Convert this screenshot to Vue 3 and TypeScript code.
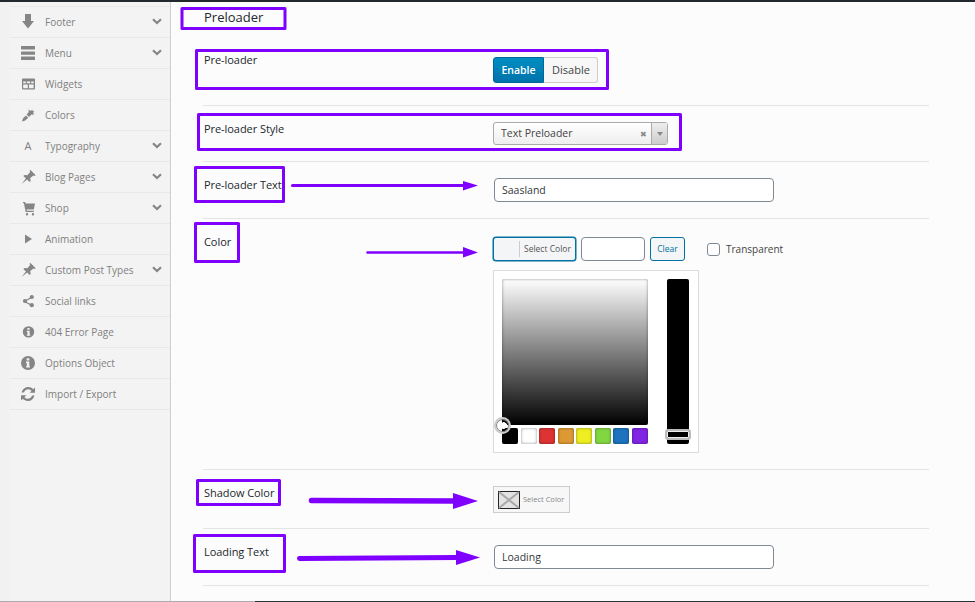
<script setup lang="ts">
interface NavItem {
  label: string
  icon: string
  more: boolean
}

const nav: NavItem[] = [
  { label: 'Footer', icon: 'down', more: true },
  { label: 'Menu', icon: 'menu', more: true },
  { label: 'Widgets', icon: 'table', more: false },
  { label: 'Colors', icon: 'brush', more: false },
  { label: 'Typography', icon: 'font', more: true },
  { label: 'Blog Pages', icon: 'pin', more: true },
  { label: 'Shop', icon: 'cart', more: true },
  { label: 'Animation', icon: 'play', more: false },
  { label: 'Custom Post Types', icon: 'pin', more: true },
  { label: 'Social links', icon: 'share', more: false },
  { label: '404 Error Page', icon: 'info-s', more: false },
  { label: 'Options Object', icon: 'info', more: false },
  { label: 'Import / Export', icon: 'refresh', more: false },
]

const swatches: string[] = ['#000000', '#ffffff', '#dd3333', '#dd9933', '#eeee22', '#81d742', '#1e73be', '#8224e3']
</script>

<template>
  <div class="page">
    <div class="topbar"></div>
    <div class="body">
      <div class="gutter"></div>
      <nav class="sidebar">
        <div v-for="item in nav" :key="item.label" class="nav-row">
          <span class="nav-icon">
            <span v-if="item.icon === 'font'" class="font-a">A</span>
            <svg v-else width="16" height="16" viewBox="0 0 16 16" fill="#858585">
              <polygon v-if="item.icon === 'down'" points="5,0 11,0 11,7 14,7 8,14.500 2,7 5,7" />
              <g v-else-if="item.icon === 'menu'">
                <rect x="1" y="1" width="14" height="3.400" rx=".5" />
                <rect x="1" y="6.400" width="14" height="3.400" rx=".5" />
                <rect x="1" y="11.600" width="14" height="3.400" rx=".5" />
              </g>
              <path
                v-else-if="item.icon === 'table'"
                fill-rule="evenodd"
                d="M3 2.500h11a1 1 0 0 1 1 1v9a1 1 0 0 1-1 1H3a1 1 0 0 1-1-1v-9a1 1 0 0 1 1-1zM3.200 5.600v1.600h2.600V5.600zm3.600 0v1.600h3.400V5.600zm4.400 0v1.600h2.600V5.600zM3.200 8.400v3.800h4.600V8.400zm5.800 0v3.800h4.600V8.400z"
              />
              <path
                v-else-if="item.icon === 'brush'"
                d="M2 14.500l1-3.200 3-2.800 2.200 2.200-3 2.800zM6.600 7.600l2.200-2.500L8.400 2.600l2.400 1.300 1.600-1.300.2 1.500 1.900.3-1.400 1.300.9 2-2.500-.3-2.500 2.600z"
              />
              <path
                v-else-if="item.icon === 'pin'"
                d="M1.500 15l4.400-5.600-2.500-2.500 1-1 3 .4 2.700-3.300-.5-1.500.9-.5 5 5-.5.9-1.500-.5-3.300 2.700.4 3-1 1-2.500-2.500z"
              />
              <path
                v-else-if="item.icon === 'cart'"
                d="M3 2h2.200l.3 1.600H15l-1.200 6H6.600l.2 1.200h7v1.300H5.700L3.900 3.300H3zM7 13a1.200 1.200 0 1 1 0 2.400A1.200 1.200 0 0 1 7 13zm6 0a1.200 1.200 0 1 1 0 2.400 1.200 1.200 0 0 1 0-2.400z"
              />
              <polygon v-else-if="item.icon === 'play'" points="5,3.500 12,8 5,12.500" />
              <g v-else-if="item.icon === 'share'">
                <path d="M5 7.400L11 4l.6 1-6 3.400 6 3.100-.6 1.100-6-3.200z" />
                <circle cx="5" cy="8" r="2.100" />
                <circle cx="11.800" cy="4" r="2.100" />
                <circle cx="11.800" cy="12.200" r="2.100" />
              </g>
              <path
                v-else-if="item.icon === 'info-s'"
                fill-rule="evenodd"
                d="M8.500 2.200a5.700 5.700 0 1 1 0 11.400 5.700 5.700 0 0 1 0-11.400zM7.400 3.900v1.900h2.200V3.900zM6.800 6.800v1.100h.7v2.700h-.7v1.200h3.400v-1.200h-.6V6.800z"
              />
              <path
                v-else-if="item.icon === 'info'"
                fill-rule="evenodd"
                d="M8 1a7 7 0 1 1 0 14A7 7 0 0 1 8 1zM6.700 3.200v2.200h2.600V3.200zM6 6.600V8h.8v3.200H6v1.400h4v-1.400h-.7V6.600z"
              />
              <g v-else-if="item.icon === 'refresh'">
                <path d="M1.600 6.600C2.300 3.400 5 1 8.200 1c2 0 3.700.9 4.900 2.200L15 1.400v5.300H9.700l1.900-1.900A4.600 4.600 0 0 0 8.200 3.300c-2 0-3.700 1.400-4.300 3.300z" />
                <path d="M14.400 9.400C13.700 12.600 11 15 7.800 15c-2 0-3.700-.9-4.900-2.200L1 14.600V9.300h5.300l-1.900 1.900a4.600 4.600 0 0 0 3.400 1.500c2 0 3.700-1.400 4.300-3.300z" />
              </g>
            </svg>
          </span>
          <span class="nav-label">{{ item.label }}</span>
          <svg v-if="item.more" class="chevron" width="10" height="7" viewBox="0 0 10 7">
            <path d="M1 1.200l4 3.800 4-3.800" fill="none" stroke="#858585" stroke-width="2.200" />
          </svg>
        </div>
      </nav>

      <main class="main">
        <h2 class="title">Preloader</h2>
        <div class="rows">
          <section class="row row-first">
            <div class="label">Pre-loader</div>
            <div class="btn-set">
              <button class="seg seg-on">Enable</button>
              <button class="seg seg-off">Disable</button>
            </div>
          </section>

          <section class="row">
            <div class="label">Pre-loader Style</div>
            <div class="select">
              <span class="select-value">Text Preloader</span>
              <span class="select-clear">✖</span>
              <span class="select-arrow"><i class="caret"></i></span>
            </div>
          </section>

          <section class="row">
            <div class="label">Pre-loader Text</div>
            <div class="input input-long">Saasland</div>
          </section>

          <section class="row">
            <div class="label">Color</div>
            <div class="color-field">
              <div class="color-top">
                <div class="color-btn">
                  <span class="color-well"></span>
                  <span class="color-btn-text">Select Color</span>
                </div>
                <div class="input input-hex"></div>
                <div class="clear-btn">Clear</div>
                <label class="transparent"><i class="check"></i>Transparent</label>
              </div>
              <div class="picker">
                <div class="picker-main">
                  <div class="gradient"></div>
                  <div class="palette">
                    <span
                      v-for="c in swatches"
                      :key="c"
                      class="swatch"
                      :style="{ backgroundColor: c }"
                    ></span>
                  </div>
                  <span class="picker-dot"></span>
                </div>
                <div class="strip"><span class="strip-handle"></span></div>
              </div>
            </div>
          </section>

          <section class="row row-shadow">
            <div class="label">Shadow Color</div>
            <div class="shadow-btn">
              <svg class="shadow-well" width="22" height="18" viewBox="0 0 22 18">
                <rect x=".5" y=".5" width="21" height="17" fill="#e2e2e2" stroke="#222" />
                <path d="M1 1l20 16M21 1L1 17" stroke="#a8a8a8" stroke-width="2" />
              </svg>
              <span class="shadow-text">Select Color</span>
            </div>
          </section>

          <section class="row">
            <div class="label">Loading Text</div>
            <div class="input input-long">Loading</div>
          </section>
        </div>
      </main>
    </div>
    <div class="bottom">
      <span class="bottom-a"></span>
      <span class="bottom-b"></span>
    </div>

    <svg class="notes" width="975" height="602" viewBox="0 0 975 602">
      <g fill="none" stroke="#7f00ff" stroke-width="3" stroke-linejoin="round">
        <rect x="182" y="8.500" width="103" height="20" />
        <rect x="196.500" y="50.500" width="411" height="38" />
        <rect x="198.500" y="114.500" width="482" height="35" />
        <rect x="195.500" y="167.500" width="88" height="34" />
        <rect x="195.500" y="223.500" width="43" height="38" />
        <rect x="197.500" y="480.500" width="82" height="24" />
        <rect x="194.500" y="535.500" width="90" height="36" />
      </g>
      <g stroke="#7f00ff" stroke-linecap="round" fill="none">
        <path d="M292.500 185.500H465" stroke-width="3" />
        <path d="M367.500 252.500H465" stroke-width="2.500" />
        <path d="M311.500 500.500L455 501" stroke-width="5.500" />
        <path d="M299.500 558.500L458 557.500" stroke-width="5" />
      </g>
      <g fill="#7f00ff">
        <polygon points="463,181 478,185.500 463,190.500" />
        <polygon points="463,247 478,252.500 463,257.500" />
        <polygon points="453,493 478,501 453,509" />
        <polygon points="456,550 480,557.500 456,565" />
      </g>
    </svg>
  </div>
</template>

<style scoped>
.page {
  position: relative;
  width: 975px;
  height: 602px;
  overflow: hidden;
  display: flex;
  flex-direction: column;
  background: #fcfcfc;
  font-family: "Open Sans", "Noto Sans", sans-serif;
}
.topbar {
  height: 2px;
  flex: none;
  background: #23282d;
}
.body {
  flex: 1;
  min-height: 0;
  display: flex;
}
.gutter {
  width: 10px;
  flex: none;
  background: #f1f1f1;
}
.sidebar {
  width: 160px;
  flex: none;
  padding-top: 4px;
  background: #f3f3f3;
  border-right: 1px solid #cfcfcf;
}
.nav-row {
  height: 31px;
  box-sizing: border-box;
  display: flex;
  align-items: center;
  padding: 0 8px 0 10px;
  border-top: 1px solid #e8e8e8;
  color: #7f7f7f;
  font-size: 10px;
  font-weight: 400;
}
.nav-row:last-child {
  height: 32px;
  border-bottom: 1px solid #e8e8e8;
}
.nav-icon {
  width: 16px;
  height: 16px;
  flex: none;
  margin-right: 9px;
  display: flex;
  align-items: center;
  justify-content: center;
}
.font-a {
  font-size: 11px;
  font-weight: 400;
  line-height: 16px;
}
.nav-label {
  flex: 1;
  white-space: nowrap;
}
.chevron {
  flex: none;
  margin-bottom: 2px;
}
.main {
  flex: 1;
  min-width: 0;
  padding-left: 32px;
}
.title {
  margin: 0;
  height: 39px;
  box-sizing: border-box;
  padding: 6px 0 0 1px;
  font-size: 13px;
  line-height: 18px;
  font-weight: 500;
  color: #23282d;
}
.rows {
  width: 726px;
}
.row {
  display: grid;
  grid-template-columns: 290px 1fr;
  align-items: start;
  padding: 16px 0;
  border-bottom: 1px solid #e4e4e4;
}
.row-first {
  padding-bottom: 22px;
}
.row-first .label {
  margin-top: -5px;
}
.row-shadow {
  padding-bottom: 15px;
}
.label {
  margin-top: -1px;
  padding-left: 1px;
  font-size: 11px;
  line-height: 15px;
  letter-spacing: -.06px;
  color: #23282d;
}
.btn-set {
  display: flex;
  width: 105px;
  height: 26px;
}
.seg {
  margin: 0;
  padding: 0;
  font-family: inherit;
  font-size: 11px;
  line-height: 24px;
  box-sizing: border-box;
  cursor: pointer;
}
.seg-on {
  width: 51px;
  color: #fff;
  font-size: 10.500px;
  font-weight: 600;
  background: linear-gradient(#008ec2, #0073aa);
  border: 1px solid #006799;
  border-radius: 3px 0 0 3px;
}
.seg-off {
  width: 54px;
  padding-left: 1px;
  color: #444;
  background: #f7f7f7;
  border: 1px solid #ccc;
  border-left: 0;
  border-radius: 0 3px 3px 0;
}
.select {
  width: 175px;
  height: 23px;
  box-sizing: border-box;
  display: flex;
  align-items: center;
  border: 1px solid #aaa;
  border-radius: 3px;
  background: linear-gradient(#ffffff, #eeeeee);
  font-size: 10.500px;
  color: #444;
}
.select-value {
  flex: 1;
  padding: 0 0 2px 7px;
}
.select-clear {
  font-size: 8px;
  color: #888;
  margin-right: 4px;
}
.select-arrow {
  width: 16px;
  height: 100%;
  box-sizing: border-box;
  border-left: 1px solid #aaa;
  background: linear-gradient(#eeeeee, #cccccc);
  display: flex;
  align-items: center;
  justify-content: center;
}
.caret {
  width: 0;
  height: 0;
  border-left: 3px solid transparent;
  border-right: 3px solid transparent;
  border-top: 4px solid #888;
}
.input {
  box-sizing: border-box;
  height: 24px;
  border: 1px solid #7e8993;
  border-radius: 4px;
  background: #fff;
  font-size: 10.500px;
  line-height: 22px;
  color: #32373c;
  padding-left: 7px;
}
.input-long {
  width: 280px;
  margin-left: 1px;
}
.input-hex {
  width: 64px;
  margin-left: 5px;
}
.color-field {
  padding-top: 2px;
}
.color-top {
  display: flex;
  align-items: center;
  height: 24px;
}
.color-btn {
  width: 83px;
  height: 24px;
  box-sizing: border-box;
  border: 1px solid #0071a1;
  border-radius: 3px;
  box-shadow: 0 0 0 .5px #0071a1;
  background: #f3f5f6;
  display: flex;
  align-items: center;
  font-size: 8.500px;
  color: #555;
}
.color-well {
  width: 25px;
  height: 16px;
  flex: none;
  border-right: 1px solid #ccc;
  margin-right: 4px;
}
.color-btn-text {
  margin-bottom: 1px;
}
.clear-btn {
  width: 35px;
  height: 24px;
  margin-left: 5px;
  box-sizing: border-box;
  border: 1px solid #0071a1;
  border-radius: 3px;
  background: #f3f5f6;
  color: #0071a1;
  font-size: 8.500px;
  line-height: 22px;
  text-align: center;
}
.transparent {
  display: flex;
  align-items: center;
  margin-left: 22px;
  font-size: 10px;
  color: #444;
}
.check {
  width: 13px;
  height: 13px;
  box-sizing: border-box;
  margin-right: 6px;
  border: 1px solid #7e8993;
  border-radius: 3px;
  background: #fff;
}
.picker {
  width: 206px;
  height: 183px;
  box-sizing: border-box;
  margin-top: 9px;
  padding: 8px;
  border: 1px solid #dcdcdc;
  background: #fff;
  display: flex;
  justify-content: space-between;
}
.picker-main {
  position: relative;
  width: 146px;
}
.gradient {
  height: 146px;
  border-radius: 2px;
  background: linear-gradient(#ffffff, #000000);
  box-shadow: inset 0 0 3px rgba(0, 0, 0, .45);
}
.palette {
  margin-top: 3px;
  display: flex;
  justify-content: space-between;
}
.swatch {
  width: 16px;
  height: 16px;
  border-radius: 2px;
  box-shadow: inset 0 0 3px rgba(0, 0, 0, .45);
}
.picker-dot {
  position: absolute;
  left: -8px;
  top: 138px;
  width: 17px;
  height: 17px;
  box-sizing: border-box;
  border-radius: 50%;
  border: 2px solid #ccc;
  box-shadow: inset 0 0 0 1px #777;
  background: radial-gradient(circle at 60% 50%, #fff 0 3px, transparent 3.500px);
}
.strip {
  position: relative;
  width: 22px;
  height: 165px;
  margin-right: 1px;
  border-radius: 2px;
  background: #000;
}
.strip-handle {
  position: absolute;
  left: -2px;
  top: 150px;
  width: 26px;
  height: 11px;
  box-sizing: border-box;
  border: 2px solid #bbb;
  border-radius: 3px;
  box-shadow: inset 0 0 0 1px #eee;
}
.shadow-btn {
  width: 77px;
  height: 27px;
  box-sizing: border-box;
  display: flex;
  align-items: center;
  padding-left: 4px;
  border: 1px solid #ccc;
  background: #f7f7f7;
}
.shadow-well {
  flex: none;
  margin-right: 3px;
}
.shadow-text {
  font-size: 7.500px;
  color: #888;
  white-space: nowrap;
  margin-bottom: 1px;
}
.bottom {
  position: absolute;
  left: 0;
  right: 0;
  bottom: 0;
  height: 1px;
  display: flex;
}
.bottom-a {
  width: 255px;
  background: #aaa;
}
.bottom-b {
  flex: 1;
  background: #2c3338;
}
.notes {
  position: absolute;
  left: 0;
  top: 0;
  pointer-events: none;
}
</style>
